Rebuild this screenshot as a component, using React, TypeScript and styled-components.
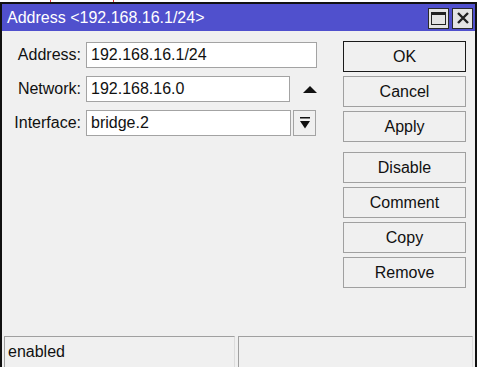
import React from 'react';
import styled, { createGlobalStyle } from 'styled-components';

const GlobalStyle = createGlobalStyle`
  html, body {
    margin: 0;
    padding: 0;
    background: #ffffff;
    font-family: "Liberation Sans", Arial, sans-serif;
    overflow: hidden;
  }
`;

const Page = styled.div`
  width: 480px;
  height: 367px;
  padding-top: 2px;
  box-sizing: border-box;
  position: relative;
`;

const Mark = styled.span<{ $x: number }>`
  position: absolute;
  top: 0;
  left: ${p => p.$x}px;
  width: 1px;
  height: 2px;
  background: #e03030;
`;

const Window = styled.div`
  width: 477px;
  height: 367px;
  box-sizing: border-box;
  border: 2px solid #111;
  border-bottom: none;
  background: #f0f0f0;
  display: flex;
  flex-direction: column;
`;

const TitleBar = styled.div`
  height: 27px;
  background: #5050cd;
  display: flex;
  align-items: center;
  padding: 0 2px 0 5px;
  gap: 3px;
`;

const Title = styled.div`
  flex: 1;
  color: #fff;
  font-size: 16px;
  padding-top: 1px;
`;

const TitleButton = styled.div`
  width: 21px;
  height: 21px;
  box-sizing: border-box;
  margin-top: 1px;
  border: 1px solid #2a2a2a;
  background: #e4e4e4;
  display: flex;
  align-items: center;
  justify-content: center;
`;

const Body = styled.div`
  flex: 1;
  display: flex;
  padding: 10px 9px 0 0;
`;

const Form = styled.div`
  flex: 1;
  display: flex;
  flex-direction: column;
  gap: 8px;
  padding-top: 1px;
`;

const Row = styled.div`
  display: flex;
  align-items: center;
  height: 26px;
`;

const Label = styled.div`
  width: 79px;
  text-align: right;
  margin-right: 5px;
  font-size: 16px;
  color: #111;
`;

const Field = styled.div<{ $w: number }>`
  width: ${p => p.$w}px;
  height: 26px;
  box-sizing: border-box;
  border: 1px solid #a3a3a3;
  background: #fff;
  font-size: 16px;
  color: #111;
  padding: 0 4px;
  display: flex;
  align-items: center;
`;

const IconSlot = styled.div`
  width: 23px;
  height: 26px;
  margin-left: 8px;
  display: flex;
  align-items: center;
  justify-content: center;
`;

const DropButton = styled.div`
  width: 23px;
  height: 26px;
  box-sizing: border-box;
  margin-left: 2px;
  border: 1px solid #a3a3a3;
  background: #f0f0f0;
  display: flex;
  align-items: center;
  justify-content: center;
`;

const Buttons = styled.div`
  width: 123px;
  display: flex;
  flex-direction: column;
  gap: 4px;
`;

const Button = styled.div<{ $primary?: boolean; $gapBefore?: boolean }>`
  height: 31px;
  box-sizing: border-box;
  border: 1px solid ${p => (p.$primary ? '#1a1a1a' : '#a0a0a0')};
  background: #f0f0f0;
  font-size: 16px;
  color: #111;
  display: flex;
  align-items: center;
  justify-content: center;
  margin-top: ${p => (p.$gapBefore ? '6px' : '0')};
`;

const StatusBar = styled.div`
  height: 32px;
  display: flex;
  gap: 3px;
  padding: 0 2px 1px 2px;
`;

const StatusCell = styled.div<{ $w: number }>`
  width: ${p => p.$w}px;
  box-sizing: border-box;
  border: 1px solid #a0a0a0;
  border-bottom-color: #c8c8c8;
  border-right-color: #dcdcdc;
  font-size: 16px;
  color: #111;
  padding: 0 3px;
  display: flex;
  align-items: center;
`;

const actions = ['Disable', 'Comment', 'Copy', 'Remove'];

export default function App() {
  return (
    <Page>
      <GlobalStyle />
      <Mark $x={50} />
      <Mark $x={113} />
      <Window>
        <TitleBar>
          <Title>Address &lt;192.168.16.1/24&gt;</Title>
          <TitleButton>
            <svg width="15" height="13" viewBox="0 0 15 13">
              <rect x="0.5" y="0.5" width="14" height="12" fill="none" stroke="#222" />
              <rect x="0" y="0" width="15" height="3" fill="#222" />
            </svg>
          </TitleButton>
          <TitleButton>
            <svg width="12" height="12" viewBox="0 0 12 12">
              <path d="M1 1 L11 11 M11 1 L1 11" stroke="#222" strokeWidth="2.4" />
            </svg>
          </TitleButton>
        </TitleBar>
        <Body>
          <Form>
            <Row>
              <Label>Address:</Label>
              <Field $w={231}>192.168.16.1/24</Field>
            </Row>
            <Row>
              <Label>Network:</Label>
              <Field $w={204}>192.168.16.0</Field>
              <IconSlot>
                <svg width="14" height="7" viewBox="0 0 14 7">
                  <path d="M7 0 L14 7 L0 7 Z" fill="#111" />
                </svg>
              </IconSlot>
            </Row>
            <Row>
              <Label>Interface:</Label>
              <Field $w={205}>bridge.2</Field>
              <DropButton>
                <svg width="10" height="13" viewBox="0 0 10 13">
                  <rect x="0" y="0" width="10" height="1.5" fill="#111" />
                  <path d="M0 4 L10 4 L5 11.5 Z" fill="#111" />
                </svg>
              </DropButton>
            </Row>
          </Form>
          <Buttons>
            <Button $primary>OK</Button>
            <Button>Cancel</Button>
            <Button>Apply</Button>
            {actions.map((a, i) => (
              <Button key={a} $gapBefore={i === 0}>
                {a}
              </Button>
            ))}
          </Buttons>
        </Body>
        <StatusBar>
          <StatusCell $w={232}>enabled</StatusCell>
          <StatusCell $w={236} />
        </StatusBar>
      </Window>
    </Page>
  );
}
